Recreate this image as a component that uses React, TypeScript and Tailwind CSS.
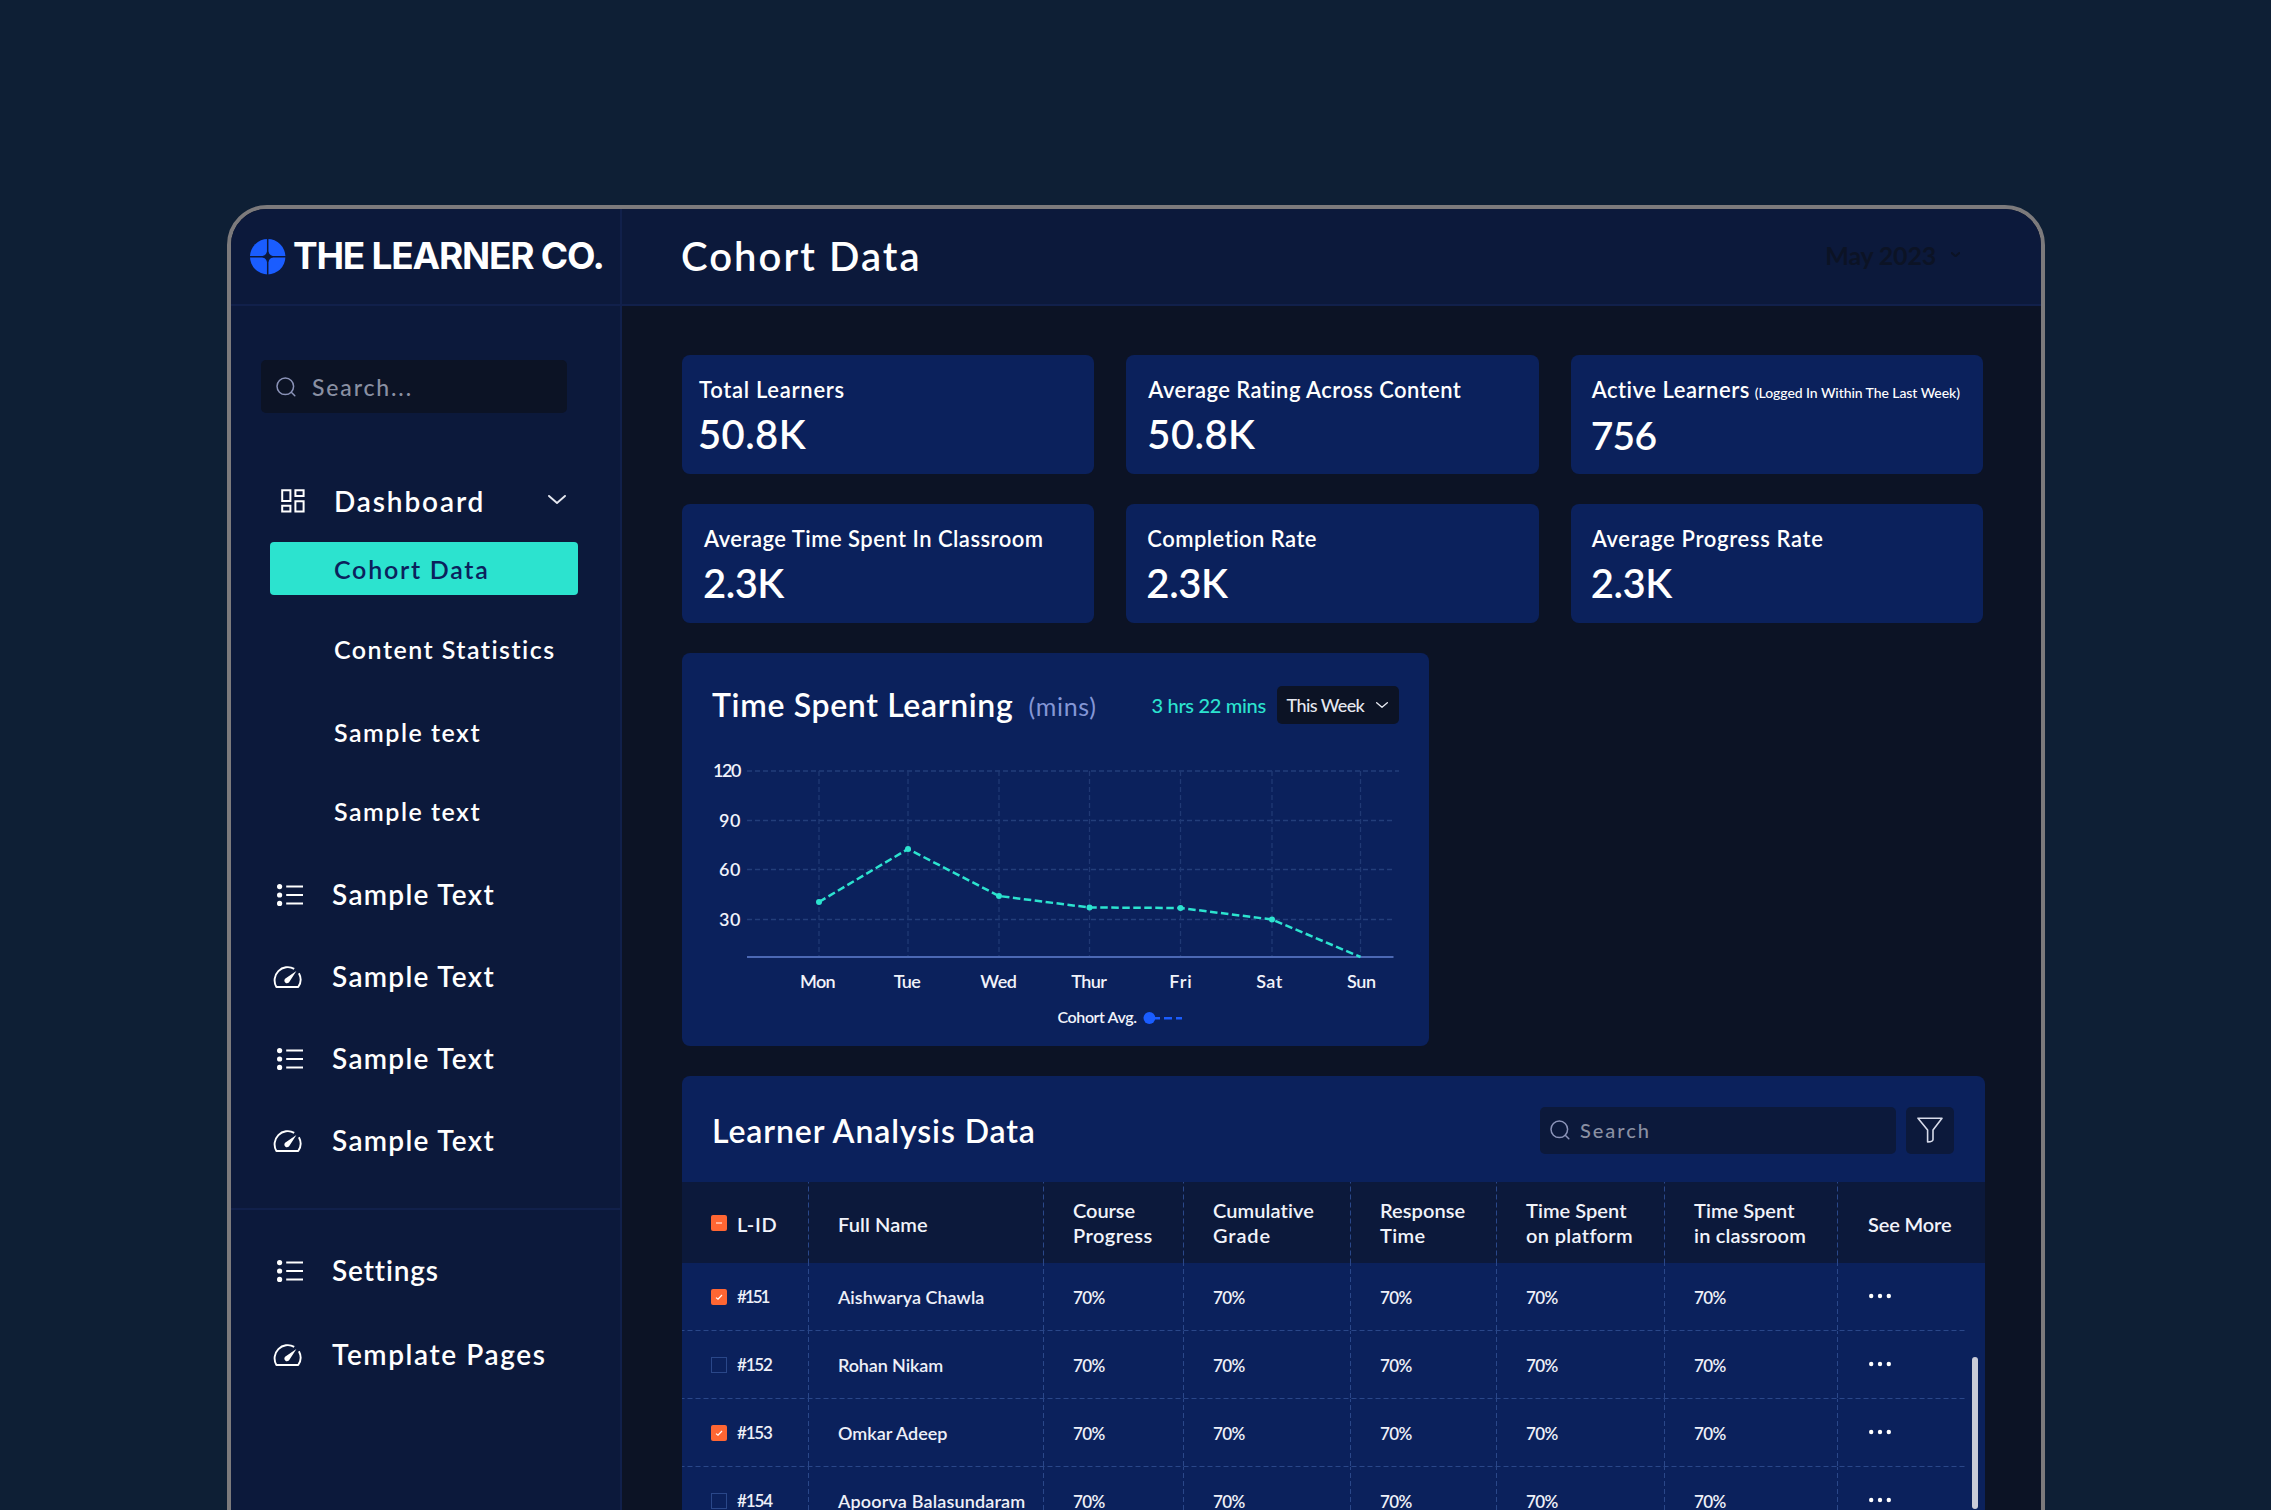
import type { ReactNode } from 'react';

function LogoMark() {
  return (
    <svg width="36" height="36" viewBox="0 0 36 36">
      <circle cx="17.7" cy="17.7" r="17.7" fill="#1a5dff" />
      <path d="M17.7 0V36M0 17.7H36" stroke="#0c193b" strokeWidth="1.5" />
      <path d="M17.7 13Q18.6 17 22.6 17.7Q18.6 18.5 17.7 22.6Q16.8 18.5 12.8 17.7Q16.8 17 17.7 13Z" fill="#0c193b" stroke="#0c193b" strokeWidth="1.6" />
    </svg>
  );
}

function SearchIcon({ size, color }: { size: number; color: string }) {
  return (
    <svg width={size} height={size} viewBox="0 0 20 20" fill="none" stroke={color} strokeWidth="1.5" strokeLinecap="round">
      <circle cx="9.3" cy="9.3" r="8.3" />
      <path d="M15.3 15.3L18.8 18.8" />
    </svg>
  );
}

function DashboardIcon() {
  return (
    <svg width="24" height="24" viewBox="0 0 24 24" fill="none" stroke="#fff" strokeWidth="2">
      <path d="M1.2 1.2H9.4V12H1.2ZM14.4 1.2H22.6V7H14.4ZM14.4 12.2H22.6V22.6H14.4ZM1.2 16.8H9.4V22.6H1.2Z" />
    </svg>
  );
}

function ListIcon() {
  return (
    <svg width="26" height="22" viewBox="0 0 26 22" fill="#fff" stroke="#fff">
      <path d="M9.2 2.4H26M9.2 10.9H26M9.2 19.4H26" strokeWidth="2" />
      <g stroke="none">
        <circle cx="2.6" cy="2.6" r="2.6" />
        <circle cx="2.6" cy="11" r="2.6" />
        <circle cx="2.6" cy="19.4" r="2.6" />
      </g>
    </svg>
  );
}

function GaugeIcon() {
  return (
    <svg width="29" height="22" viewBox="0 0 29 22" fill="none" stroke="#fff" strokeWidth="1.9" strokeLinejoin="round">
      <path d="M21.2 2.8A13.2 13.2 0 0 0 3.4 21H25.2A13.2 13.2 0 0 0 25.9 7.2" />
      <path d="M23.4 5L16.6 15.4A2.7 2.7 0 1 1 12.4 12.4Z" fill="#fff" stroke="none" />
    </svg>
  );
}

function Chevron({ w, h, color, stroke }: { w: number; h: number; color: string; stroke: number }) {
  return (
    <svg width={w} height={h} viewBox="0 0 18 9" fill="none" stroke={color} strokeWidth={stroke} strokeLinecap="round" strokeLinejoin="round">
      <path d="M1 1L9 8L17 1" />
    </svg>
  );
}

function NavItem({ icon, label, className }: { icon: 'list' | 'gauge'; label: string; className: string }) {
  return (
    <div className={`flex h-10 items-center text-[28px] ${className}`}>
      <span className={icon === 'list' ? 'w-[101px] pt-0.5 pl-[46px]' : 'w-[101px] pt-px pl-[42px]'}>
        {icon === 'list' ? <ListIcon /> : <GaugeIcon />}
      </span>
      {label}
    </div>
  );
}

function Sidebar() {
  return (
    <aside className="w-[391px] shrink-0 border-r-2 border-[#11204b] bg-[#0c193b]">
      <div className="flex h-[97px] items-center gap-[7px] border-b-2 border-[#11204b] pl-[19px]">
        <LogoMark />
        <span className="pb-0.5 font-['Inter'] text-[37px] font-bold tracking-[-1.24px] whitespace-nowrap">THE LEARNER CO.</span>
      </div>
      <div className="mt-[54px] ml-[30px] flex h-[53px] w-[306px] items-center gap-[16px] rounded-[5px] bg-[#0c1325] pl-[15px] text-[#8a90a3]">
        <SearchIcon size={20} color="#8b93b8" />
        <span className="pt-0.5 text-[23px] font-medium tracking-[1.85px]">Search...</span>
      </div>
      <nav className="flex flex-col">
        <div className="mt-[68px] flex h-10 items-center pl-[50px]">
          <DashboardIcon />
          <span className="ml-[29px] w-[214px] text-[28px] tracking-[1.87px]">Dashboard</span>
          <span className="pb-[3px]"><Chevron w={18} h={9} color="#e6e8f0" stroke={1.9} /></span>
        </div>
        <div className="mt-[21px] ml-[39px] flex h-[53px] w-[308px] items-center rounded bg-[#2ce3cf] pt-0.5 pl-[64px] text-[25px] tracking-[1.75px] text-[#0b215c]">Cohort Data</div>
        <div className="mt-[34px] flex h-10 items-center pt-px pl-[103px] text-[25px] tracking-[1.47px]">Content Statistics</div>
        <div className="mt-[43px] flex h-10 items-center pt-0.5 pl-[103px] text-[25px] tracking-[1.5px]">Sample text</div>
        <div className="mt-[39px] flex h-10 items-center pt-0.5 pl-[103px] text-[25px] tracking-[1.5px]">Sample text</div>
        <NavItem icon="list" label="Sample Text" className="mt-[43px] tracking-[1.32px]" />
        <NavItem icon="gauge" label="Sample Text" className="mt-[42px] tracking-[1.32px]" />
        <NavItem icon="list" label="Sample Text" className="mt-[42px] tracking-[1.32px]" />
        <NavItem icon="gauge" label="Sample Text" className="mt-[42px] tracking-[1.32px]" />
        <div className="mt-[48px] h-0.5 bg-[#11204b]" />
        <NavItem icon="list" label="Settings" className="mt-[40px] tracking-[0.87px]" />
        <NavItem icon="gauge" label="Template Pages" className="mt-[44px] tracking-[1.6px]" />
      </nav>
    </aside>
  );
}

function StatCard({ label, value, note, pad, labelClass, valueClass }: { label: string; value: string; note?: string; pad: string; labelClass: string; valueClass: string }) {
  return (
    <div className={`h-[119px] rounded-lg bg-[#0b215c] pt-5 whitespace-nowrap ${pad}`}>
      <div className={`text-[22px] leading-[30px] ${labelClass}`}>
        {label}
        {note && <span className="ml-[5px] text-[14px] font-medium tracking-[-0.07px]">{note}</span>}
      </div>
      <div className={`-ml-px leading-[44px] ${valueClass}`}>{value}</div>
    </div>
  );
}

const days = [
  { name: 'Mon', x: 819, label: 817.5, y: 902, track: 'tracking-[-0.6px]' },
  { name: 'Tue', x: 908, label: 906.8, y: 849, track: 'tracking-[-0.77px]' },
  { name: 'Wed', x: 999, label: 998.5, y: 896, track: 'tracking-[-0.39px]' },
  { name: 'Thur', x: 1089.5, label: 1088.7, y: 907.5, track: 'tracking-[-0.59px]' },
  { name: 'Fri', x: 1180.5, label: 1181, y: 908, track: 'tracking-[0.96px]' },
  { name: 'Sat', x: 1272, label: 1269.5, y: 919.5, track: 'tracking-[0.44px]' },
  { name: 'Sun', x: 1360.5, label: 1361.3, y: 957, track: 'tracking-[-0.4px]' },
];

const ticks = [
  { value: '120', y: 771, end: 1399, track: 'tracking-[-1.5px]', x: 713 },
  { value: '90', y: 820.5, end: 1394, track: 'tracking-[0.6px]', x: 719 },
  { value: '60', y: 869.5, end: 1394, track: 'tracking-[0.6px]', x: 719 },
  { value: '30', y: 919.5, end: 1394, track: 'tracking-[0.6px]', x: 719 },
];

function TimeChart() {
  return (
    <svg className="block" width="747" height="322" viewBox="682 724 747 322" fill="none">
      {ticks.map((t) => (
        <g key={t.value}>
          <path d={`M747 ${t.y}H${t.end}`} stroke="#233e7a" strokeWidth="1.3" strokeDasharray="5 3" />
          <text x={t.x} y={t.y + 6.3} fill="#f1f3fa" className={`text-[18px] ${t.track}`}>{t.value}</text>
        </g>
      ))}
      {days.map((d) => (
        <g key={d.name}>
          <path d={`M${d.x} 771V956`} stroke="#203974" strokeWidth="1.3" strokeDasharray="5 3" />
          <text x={d.label} y="988" fill="#f1f3fa" textAnchor="middle" className={`text-[18px] ${d.track}`}>{d.name}</text>
        </g>
      ))}
      <path d="M747 957H1393.5" stroke="#4b68b4" strokeWidth="2.2" />
      <path d={'M' + days.map((d) => `${d.x} ${d.y}`).join('L')} stroke="#2ce3cf" strokeWidth="2.5" strokeDasharray="7.5 3.5" />
      {days.slice(0, 6).map((d) => (
        <circle key={d.name} cx={d.x} cy={d.y} r="3" fill="#2ce3cf" />
      ))}
      <text x="1057.5" y="1023" fill="#f1f3fa" className="text-[16px] tracking-[-0.4px]">Cohort Avg.</text>
      <circle cx="1149.4" cy="1018" r="5.9" fill="#1a5dff" />
      <path d="M1153 1018.3H1160M1164 1018.3H1172M1176 1018.3H1182" stroke="#1a5dff" strokeWidth="2.4" />
    </svg>
  );
}

const columnWidths = ['w-[127px]', 'w-[235px]', 'w-[140px]', 'w-[167px]', 'w-[146px]', 'w-[168px]', 'w-[173px]', 'w-[127px]'];

const dashRight = 'bg-[linear-gradient(to_bottom,#2a4789_5px,transparent_5px)] bg-[length:1.5px_8px] bg-right bg-repeat-y';

function Cell({ index, className = '', children }: { index: number; className?: string; children: ReactNode }) {
  return (
    <div className={`flex shrink-0 items-center pl-[29px] whitespace-nowrap ${columnWidths[index]} ${index < 7 ? dashRight : ''} ${className}`}>
      {children}
    </div>
  );
}

function Checkbox({ state }: { state: 'on' | 'off' | 'mixed' }) {
  if (state === 'off') return <span className="mr-[10px] size-4 border border-[#2a4789]" />;
  return (
    <span className="mr-[10px] flex size-4 items-center justify-center rounded-[2px] bg-[#ff6633]">
      <svg width="16" height="16" viewBox="0 0 16 16" fill="none" stroke="#fff" strokeWidth="1.2">
        <path d={state === 'on' ? 'M5 8.6L7 10.2L11 6' : 'M5 8H11'} />
      </svg>
    </span>
  );
}

const headings: { lines: string[]; tracks: string[] }[] = [
  { lines: ['Course', 'Progress'], tracks: ['tracking-[-0.06px]', 'tracking-[0.46px]'] },
  { lines: ['Cumulative', 'Grade'], tracks: ['tracking-[0.09px]', 'tracking-[0.88px]'] },
  { lines: ['Response', 'Time'], tracks: ['tracking-[0.06px]', 'tracking-[0.37px]'] },
  { lines: ['Time Spent', 'on platform'], tracks: ['tracking-[0.05px]', 'tracking-[0.35px]'] },
  { lines: ['Time Spent', 'in classroom'], tracks: ['tracking-[0.05px]', 'tracking-[0.2px]'] },
];

const learners = [
  { id: '#151', name: 'Aishwarya Chawla', on: true, idTrack: 'tracking-[-2px]', track: 'tracking-[0.02px]' },
  { id: '#152', name: 'Rohan Nikam', on: false, idTrack: 'tracking-[-1.2px]', track: 'tracking-[-0.12px]' },
  { id: '#153', name: 'Omkar Adeep', on: true, idTrack: 'tracking-[-1.2px]', track: 'tracking-[0px]' },
  { id: '#154', name: 'Apoorva Balasundaram', on: false, idTrack: 'tracking-[-1.1px]', track: 'tracking-[0.16px]' },
];

function LearnerTable() {
  return (
    <section className="relative mt-[30px] h-[440px] w-[1303px] overflow-hidden rounded-t-lg bg-[#0b215c]">
      <div className="flex h-[106px] items-center pt-0.5 pr-[31px] pl-[30px]">
        <h2 className="pt-0.5 text-[32px] tracking-[0.9px]">Learner Analysis Data</h2>
        <div className="ml-auto flex h-[47px] w-[356px] items-center gap-[10px] rounded-[5px] bg-[#0c193b] pl-[10px] text-[#8a90a3]">
          <SearchIcon size={20} color="#8b93b8" />
          <span className="text-[20px] font-medium tracking-[1.95px]">Search</span>
        </div>
        <div className="ml-[10px] flex h-[47px] w-12 items-center justify-center rounded-[5px] bg-[#0c193b]">
          <svg width="26" height="26" viewBox="0 0 26 26" fill="none" stroke="#d7dbea" strokeWidth="1.6" strokeLinejoin="round">
            <path d="M1 1.2H25L16 13V22.5Q16 24.8 10.6 25V13Z" />
          </svg>
        </div>
      </div>
      <div className="flex h-[81px] bg-[#0c193b] text-[20px] text-[#f1f3fa]">
        <Cell index={0}>
          <Checkbox state="mixed" />
          <span className="pt-0.5 tracking-[0.8px]">L-ID</span>
        </Cell>
        <Cell index={1}><span className="pt-0.5 tracking-[0.1px]">Full Name</span></Cell>
        {headings.map((h, i) => (
          <Cell key={i} index={i + 2}>
            <div className="leading-[25px]">
              <div className={h.tracks[0]}>{h.lines[0]}</div>
              <div className={h.tracks[1]}>{h.lines[1]}</div>
            </div>
          </Cell>
        ))}
        <Cell index={7}><span className="pt-0.5 pl-px tracking-[-0.14px]">See More</span></Cell>
      </div>
      {learners.map((l) => (
        <div key={l.id} className="flex h-[68px] w-[1283px] bg-[linear-gradient(to_right,#2a4789_5px,transparent_5px)] bg-[length:8px_1.5px] bg-bottom bg-repeat-x text-[18px] text-[#eef0f8]">
          <Cell index={0}>
            <Checkbox state={l.on ? 'on' : 'off'} />
            <span className={`text-[17px] ${l.idTrack}`}>{l.id}</span>
          </Cell>
          <Cell index={1}><span className={l.track}>{l.name}</span></Cell>
          {headings.map((_, i) => (
            <Cell key={i} index={i + 2}><span className="pt-px text-[17px] tracking-[-0.6px]">70%</span></Cell>
          ))}
          <Cell index={7} className="pb-0.5">
            <svg className="ml-px" width="24" height="6" viewBox="0 0 24 6" fill="#fff">
              <circle cx="3.2" cy="3" r="2.2" />
              <circle cx="12" cy="3" r="2.2" />
              <circle cx="20.8" cy="3" r="2.2" />
            </svg>
          </Cell>
        </div>
      ))}
      <span className="absolute top-[281px] right-[7px] h-[152px] w-[6px] rounded-full bg-[#c9cbd8]" />
    </section>
  );
}

export default function App() {
  return (
    <div className="h-[1510px] w-[2271px] overflow-hidden bg-[#0e1f35] pt-[205px] pl-[227px] font-['Lato',sans-serif] font-semibold text-white">
      <div className="flex h-[1320px] w-[1818px] overflow-hidden rounded-t-[40px] border-4 border-[#7c7a7c] bg-[#0c1325]">
        <Sidebar />
        <main className="flex-1">
          <header className="flex h-[97px] items-center border-b-2 border-[#11204b] bg-[#0c193b] pr-[81px] pl-[59px]">
            <h1 className="pb-px text-[40px] tracking-[2.05px]">Cohort Data</h1>
            <span className="ml-auto pb-0.5 text-[25px] font-bold tracking-[-0.2px] text-[#0c1325]">May 2023</span>
            <span className="ml-[15px] pb-1"><Chevron w={9} h={5} color="#0c1325" stroke={4} /></span>
          </header>
          <div className="pt-[49px] pl-[60px]">
            <div className="grid w-[1301px] grid-cols-3 gap-x-8 gap-y-[30px]">
              <StatCard label="Total Learners" value="50.8K" pad="pl-[17px]" labelClass="tracking-[0.71px]" valueClass="mt-[7px] text-[40px] tracking-[0.4px]" />
              <StatCard label="Average Rating Across Content" value="50.8K" pad="pl-[22px]" labelClass="tracking-[0.42px]" valueClass="mt-[7px] text-[40px] tracking-[0.4px]" />
              <StatCard label="Active Learners" note="(Logged In Within The Last Week)" value="756" pad="pl-[21px]" labelClass="tracking-[0.52px]" valueClass="mt-[5px] text-[39px] tracking-[-0.7px]" />
              <StatCard label="Average Time Spent In Classroom" value="2.3K" pad="pl-[22px]" labelClass="tracking-[0.48px]" valueClass="mt-[7px] text-[40px] tracking-[-0.5px]" />
              <StatCard label="Completion Rate" value="2.3K" pad="pl-[21px]" labelClass="tracking-[0.46px]" valueClass="mt-[7px] text-[40px] tracking-[-0.4px]" />
              <StatCard label="Average Progress Rate" value="2.3K" pad="pl-[21px]" labelClass="tracking-[0.66px]" valueClass="mt-[7px] text-[40px] tracking-[-0.4px]" />
            </div>
            <section className="mt-[30px] h-[393px] w-[747px] rounded-lg bg-[#0b215c] pt-[33px]">
              <div className="flex h-[38px] items-center pl-[30px] whitespace-nowrap">
                <h2 className="w-[316.5px] text-[32px] tracking-[0.65px]">Time Spent Learning</h2>
                <span className="w-[123px] pt-[4px] text-[25px] font-normal tracking-[0.7px] text-[#8496d6]">(mins)</span>
                <span className="w-[125px] text-[20px] font-medium tracking-[-0.31px] text-[#2ce3cf]">3 hrs 22 mins</span>
                <div className="flex h-[38px] w-[122.5px] items-center rounded-[5px] bg-[#0c1325] pl-[10px] text-[18px] text-[#e6e8f0]">
                  <span className="w-[89px] font-medium tracking-[-0.6px]">This Week</span>
                  <Chevron w={12} h={6} color="#e6e8f0" stroke={2} />
                </div>
              </div>
              <TimeChart />
            </section>
            <LearnerTable />
          </div>
        </main>
      </div>
    </div>
  );
}
